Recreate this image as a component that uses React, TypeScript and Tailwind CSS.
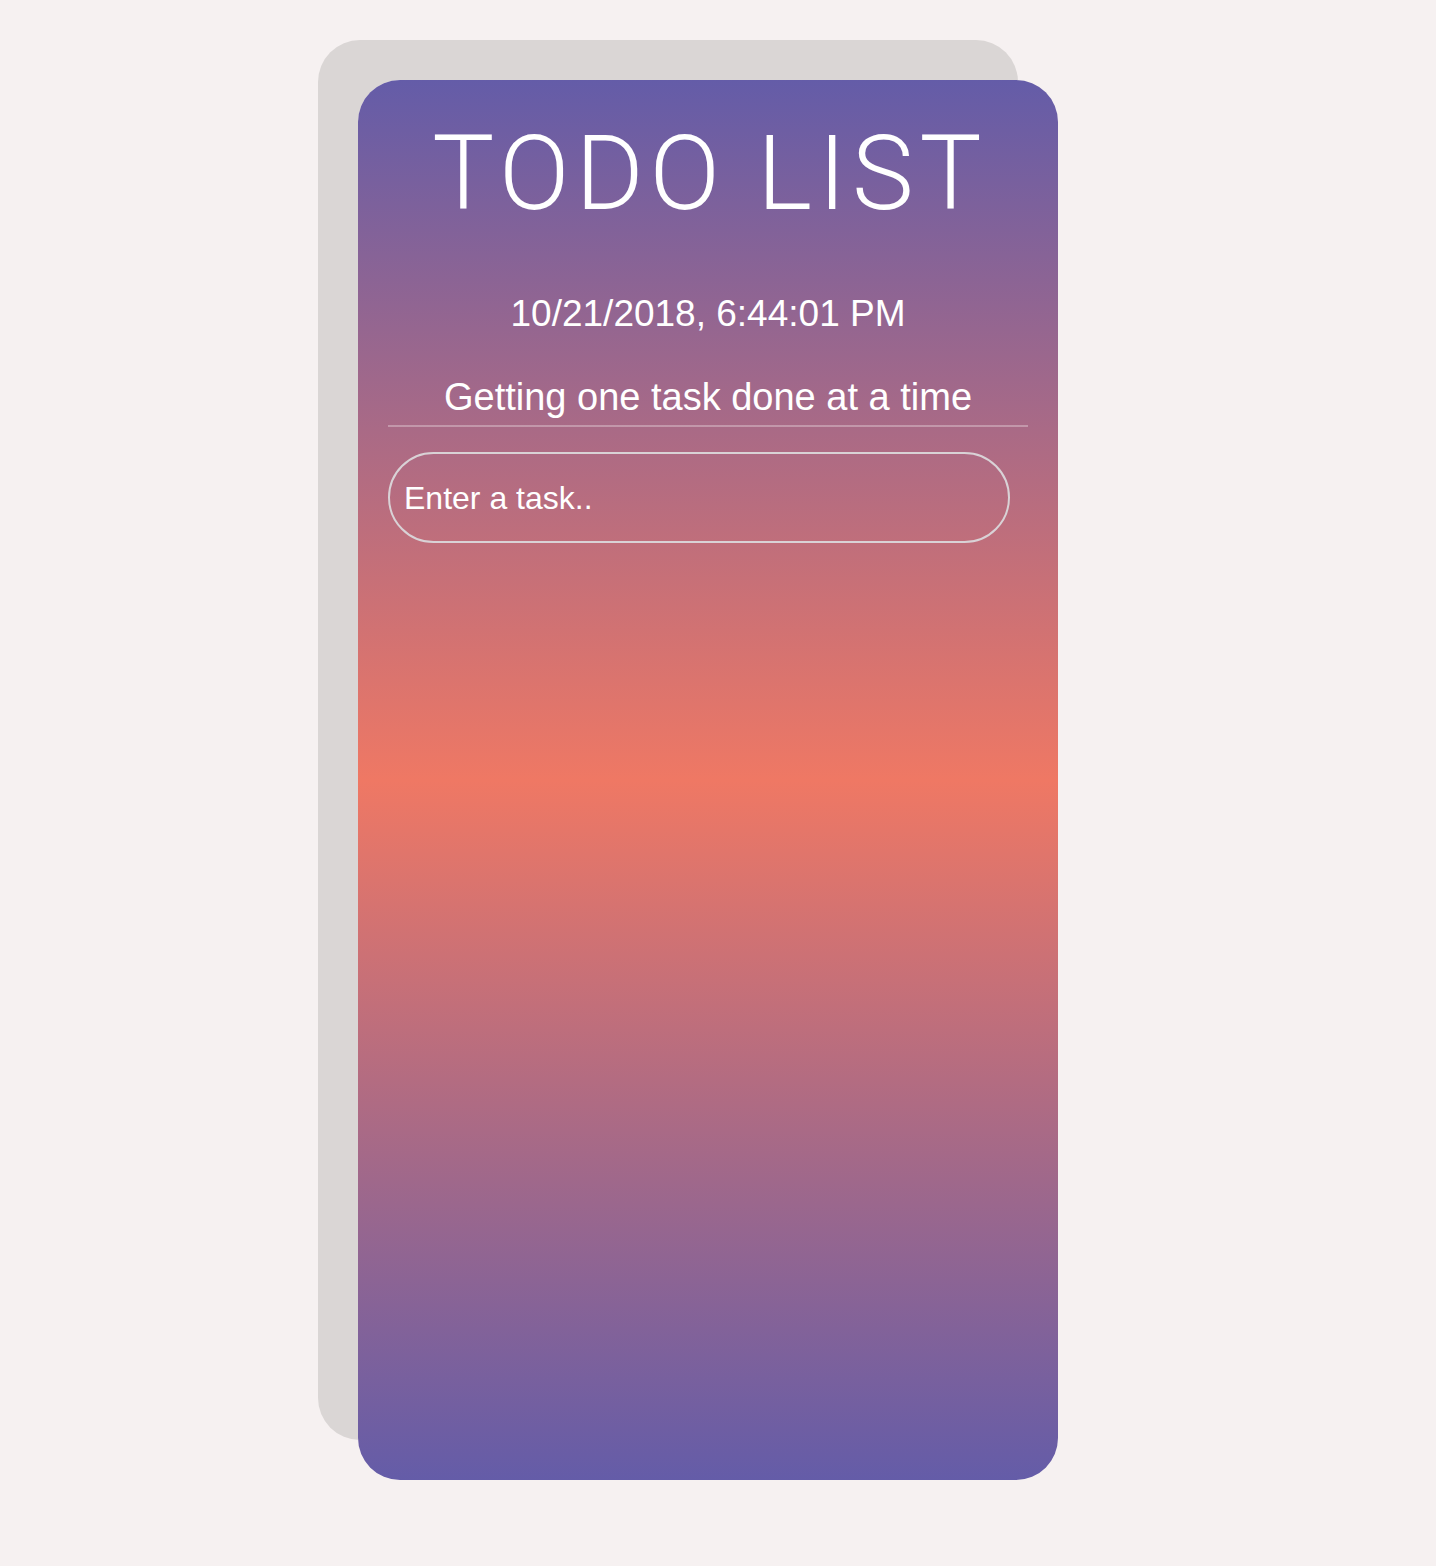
const App = () => {
  return (
    <div className="min-h-screen bg-[#f6f1f1] pt-[80px] pl-[358px] pb-[86px] font-['Liberation_Sans',Arial,sans-serif]">
      {/* Card with offset grey backing */}
      <div className="w-[700px] h-[1400px] rounded-[42px] bg-[linear-gradient(to_bottom,#645ca8_0%,#ef7864_50%,#645ca8_100%)] shadow-[-40px_-40px_0_0_#dad6d5] px-[30px] text-white">
        <h1 className="pt-[34px] pl-[4px] text-center font-['Roboto',sans-serif] font-light text-[104px] leading-[120px] tracking-[6px]">
          TODO LIST
        </h1>

        <div className="mt-[58px] text-center text-[37px] leading-[44px]">
          10/21/2018, 6:44:01 PM
        </div>

        <div className="mt-[41px] text-center text-[38px] leading-[40px]">
          Getting one task done at a time
        </div>
        <div className="mt-[8px] h-[2px] bg-white/30" />

        <div className="mt-[25px] w-[622px] h-[91px] rounded-full border-2 border-[#d9d2d6] flex items-center pl-[14px]">
          <input
            className="flex-1 bg-transparent text-[32px] text-white outline-none placeholder:text-white"
            placeholder="Enter a task.."
          />
        </div>
      </div>
    </div>
  );
};

export default App;
